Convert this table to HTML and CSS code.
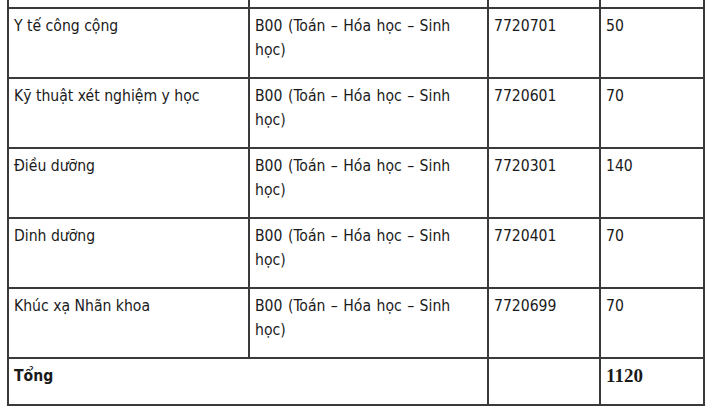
FILE: index.html
```html
<!DOCTYPE html>
<html lang="vi">
<head>
<meta charset="utf-8">
<link rel="stylesheet" href="styles.css">
</head>
<body>
<table class="tbl">
  <colgroup>
    <col class="c1"><col class="c2"><col class="c3"><col class="c4">
  </colgroup>
  <tbody>
    <tr class="cut"><td></td><td></td><td></td><td></td></tr>
    <tr><td>Y tế công cộng</td><td class="sub">B00 (Toán – Hóa học – Sinh học)</td><td>7720701</td><td>50</td></tr>
    <tr><td>Kỹ thuật xét nghiệm y học</td><td class="sub">B00 (Toán – Hóa học – Sinh học)</td><td>7720601</td><td>70</td></tr>
    <tr><td>Điều dưỡng</td><td class="sub">B00 (Toán – Hóa học – Sinh học)</td><td>7720301</td><td>140</td></tr>
    <tr><td>Dinh dưỡng</td><td class="sub">B00 (Toán – Hóa học – Sinh học)</td><td>7720401</td><td>70</td></tr>
    <tr><td>Khúc xạ Nhãn khoa</td><td class="sub">B00 (Toán – Hóa học – Sinh học)</td><td>7720699</td><td>70</td></tr>
    <tr><td colspan="2"><strong class="label">Tổng</strong></td><td></td><td><strong class="total">1120</strong></td></tr>
  </tbody>
</table>
</body>
</html>
```
FILE: styles.css
```css
html {
  background: #ffffff;
}
body {
  margin: 0 0 0 7px;
  font-family: "DejaVu Sans Condensed", "DejaVu Sans", sans-serif;
  font-size: 15.6px;
  line-height: 24px;
  color: #1a1a1a;
}
.tbl {
  width: 698px;
  border-collapse: separate;
  border-spacing: 0;
  table-layout: fixed;
  margin-top: -63px;
  border-left: 2px solid #3a3a3a;
  border-top: 2px solid #3a3a3a;
}
.c1 { width: 241px; }
.c2 { width: 239px; }
.c3 { width: 112px; }
.c4 { width: 104px; }
.tbl td {
  border-right: 2px solid #3a3a3a;
  border-bottom: 2px solid #3a3a3a;
  padding: 5px 5px 15px 5px;
  vertical-align: top;
}
.tbl td.sub {
  padding-right: 30px;
  word-spacing: 1px;
}
.cut td {
  height: 48px;
}
.label {
  font-weight: bold;
}
.total {
  font-family: "Liberation Serif", serif;
  font-size: 19px;
  font-weight: bold;
}
```
